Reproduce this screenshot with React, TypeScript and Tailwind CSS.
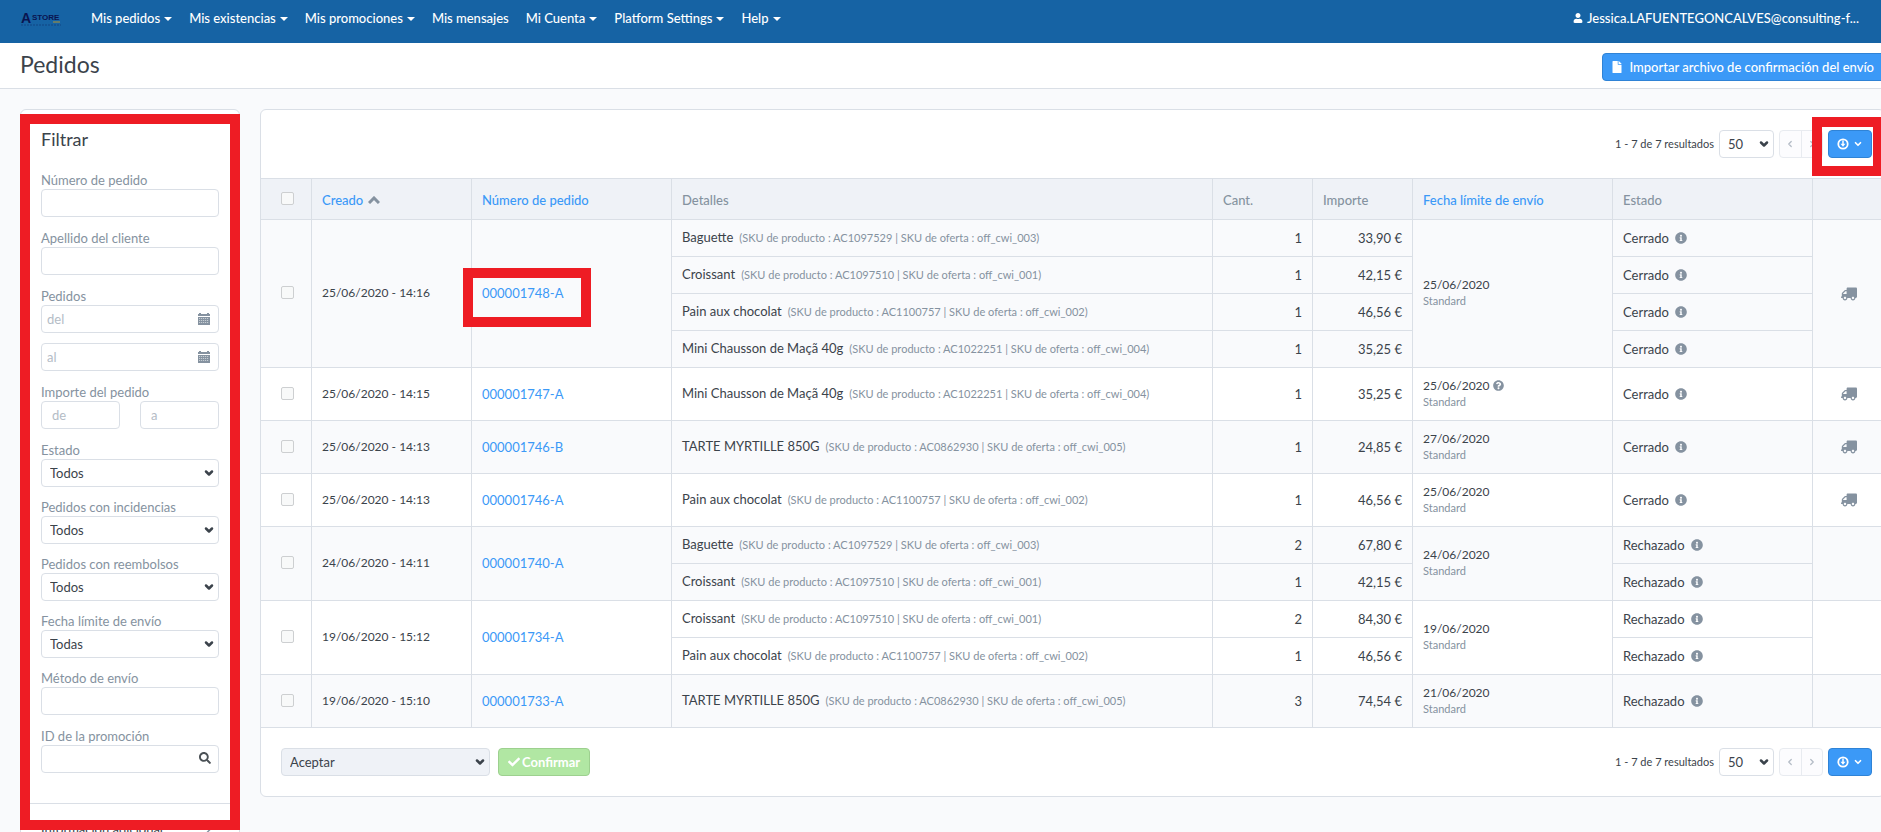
import React from 'react'
import { FaUser, FaFile, FaInfoCircle, FaQuestionCircle, FaTruck, FaCheck, FaSearch } from 'react-icons/fa'
import { LuChevronDown, LuChevronLeft, LuChevronRight } from 'react-icons/lu'

const menu = [
  { label: 'Mis pedidos', caret: true },
  { label: 'Mis existencias', caret: true },
  { label: 'Mis promociones', caret: true },
  { label: 'Mis mensajes', caret: false },
  { label: 'Mi Cuenta', caret: true },
  { label: 'Platform Settings', caret: true },
  { label: 'Help', caret: true },
]

const baguette = { name: 'Baguette', sku: 'AC1097529', offer: 'off_cwi_003' }
const croissant = { name: 'Croissant', sku: 'AC1097510', offer: 'off_cwi_001' }
const pain = { name: 'Pain aux chocolat', sku: 'AC1100757', offer: 'off_cwi_002' }
const chausson = { name: 'Mini Chausson de Maçã 40g', sku: 'AC1022251', offer: 'off_cwi_004' }
const tarte = { name: 'TARTE MYRTILLE 850G', sku: 'AC0862930', offer: 'off_cwi_005' }

const orders = [
  {
    id: '000001748-A', created: '25/06/2020 - 14:16', due: '25/06/2020', state: 'Cerrado', truck: true, marked: true,
    lines: [
      { ...baguette, qty: 1, amount: '33,90 €' },
      { ...croissant, qty: 1, amount: '42,15 €' },
      { ...pain, qty: 1, amount: '46,56 €' },
      { ...chausson, qty: 1, amount: '35,25 €' },
    ],
  },
  { id: '000001747-A', created: '25/06/2020 - 14:15', due: '25/06/2020', help: true, state: 'Cerrado', truck: true, lines: [{ ...chausson, qty: 1, amount: '35,25 €' }] },
  { id: '000001746-B', created: '25/06/2020 - 14:13', due: '27/06/2020', state: 'Cerrado', truck: true, lines: [{ ...tarte, qty: 1, amount: '24,85 €' }] },
  { id: '000001746-A', created: '25/06/2020 - 14:13', due: '25/06/2020', state: 'Cerrado', truck: true, lines: [{ ...pain, qty: 1, amount: '46,56 €' }] },
  {
    id: '000001740-A', created: '24/06/2020 - 14:11', due: '24/06/2020', state: 'Rechazado',
    lines: [
      { ...baguette, qty: 2, amount: '67,80 €' },
      { ...croissant, qty: 1, amount: '42,15 €' },
    ],
  },
  {
    id: '000001734-A', created: '19/06/2020 - 15:12', due: '19/06/2020', state: 'Rechazado',
    lines: [
      { ...croissant, qty: 2, amount: '84,30 €' },
      { ...pain, qty: 1, amount: '46,56 €' },
    ],
  },
  { id: '000001733-A', created: '19/06/2020 - 15:10', due: '21/06/2020', state: 'Rechazado', lines: [{ ...tarte, qty: 3, amount: '74,54 €' }] },
]

const box = 'h-7 w-full rounded border border-[#dadfe6] bg-white'
const border = 'border-b border-r border-[#dadfe6]'
const head = `${border} px-[10px] pt-[2px] font-medium`
const cell = `${border} px-[10px] pb-px`
const labelText = 'mb-px block leading-[15px] text-[#8592a0]'
const blueButton = 'flex h-7 items-center rounded border border-[#2f83d6] bg-[#3b99f7] text-white'

const Logo = () => (
  <a href="#" aria-label="Astore" className="mt-3 block w-10 shrink-0">
    <svg viewBox="0 0 40 15" className="h-[15px] w-10 overflow-visible">
      <text x="0" y="11" fontSize="14" fontWeight="700" fontFamily="Liberation Sans, sans-serif" fill="#0a1450">A</text>
      <text x="11" y="8" fontSize="8" fontWeight="700" fontFamily="Liberation Sans, sans-serif" fill="#0a1450">STORE</text>
      <path d="M32 10h7" stroke="#7f8558" strokeWidth="1.5" />
      <path d="M0 13h40" stroke="#13508f" strokeWidth="1.5" strokeDasharray="2 1" />
    </svg>
  </a>
)

const Caret = () => (
  <svg viewBox="0 0 8 4" className="mt-[2px] h-1 w-2" fill="currentColor">
    <path d="M0 0h8l-4 4z" />
  </svg>
)

const CalendarIcon = () => (
  <svg viewBox="0 0 12 12" className="absolute right-[9px] top-2 h-3 w-3" fill="#8592a0">
    <path d="M0 1h1v-1h2v1h6v-1h2v1h1v2h-12z" />
    <path d="M0 4h12v8h-12z" />
    <path d="M1 5.5h10M1 7.5h10M1 9.5h10" stroke="#e3e6ea" strokeWidth=".7" strokeDasharray="1.2 .8" />
  </svg>
)

const Select = ({ id, options, className = '' }: { id: string; options: string[]; className?: string }) => (
  <div className="relative">
    <select id={id} aria-label={id} className={`h-7 w-full appearance-none rounded border border-[#dadfe6] pl-2 text-[#3b434b] ${className || 'bg-white'}`}>
      {options.map((o) => <option key={o}>{o}</option>)}
    </select>
    <LuChevronDown strokeWidth={5} className="pointer-events-none absolute right-1 top-2 size-3 text-[#3b434b]" />
  </div>
)

const Field = ({ id, label, children }: { id: string; label: string; children?: React.ReactNode }) => (
  <div className="mb-[14px]">
    <label htmlFor={id} className={labelText}>{label}</label>
    {children || <input id={id} type="text" className={`${box} px-2`} />}
  </div>
)

const SelectField = ({ id, label, option }: { id: string; label: string; option: string }) => (
  <div className="mb-[13px]">
    <label htmlFor={id} className={labelText}>{label}</label>
    <Select id={id} options={[option]} />
  </div>
)

const Filters = () => (
  <aside className="relative w-[220px] shrink-0">
    <div className="rounded-md border border-[#dadfe6] bg-white">
      <form className="border-b border-[#dadfe6] px-5 pb-4 pt-[17px]">
        <h2 className="mb-[22px] text-lg leading-6 text-[#3b434b]">Filtrar</h2>
        <Field id="numero" label="Número de pedido" />
        <Field id="apellido" label="Apellido del cliente" />
        <Field id="del" label="Pedidos">
          <div className="relative mb-[10px]">
            <input id="del" placeholder="del" className={`${box} px-[5px] placeholder:text-[#b4bcc6]`} />
            <CalendarIcon />
          </div>
          <div className="relative">
            <input aria-label="al" placeholder="al" className={`${box} px-[5px] placeholder:text-[#b4bcc6]`} />
            <CalendarIcon />
          </div>
        </Field>
        <Field id="importe" label="Importe del pedido">
          <div className="flex gap-5">
            <input id="importe" placeholder="de" className={`${box} min-w-0 px-[10px] placeholder:text-[#b4bcc6]`} />
            <input aria-label="a" placeholder="a" className={`${box} min-w-0 px-[10px] placeholder:text-[#b4bcc6]`} />
          </div>
        </Field>
        <SelectField id="estado" label="Estado" option="Todos" />
        <SelectField id="incidencias" label="Pedidos con incidencias" option="Todos" />
        <SelectField id="reembolsos" label="Pedidos con reembolsos" option="Todos" />
        <SelectField id="fecha" label="Fecha límite de envío" option="Todas" />
        <Field id="metodo" label="Método de envío" />
        <Field id="promocion" label="ID de la promoción">
          <div className="relative">
            <input id="promocion" className={`${box} px-2`} />
            <FaSearch className="absolute right-2 top-[7px] size-3 text-[#4b5156]" />
          </div>
        </Field>
      </form>
      <button className="flex w-full items-center justify-between px-5 py-4 text-[#3b434b]">
        <span className="leading-[18px]">Información adicional</span>
        <LuChevronRight strokeWidth={3} className="mr-1 size-3 text-[#8592a0]" />
      </button>
    </div>
    <div className="pointer-events-none absolute inset-x-0 top-[5px] h-[716px] border-[10px] border-[#ee1c24]" />
  </aside>
)

const Pager = ({ id, marked }: { id: string; marked?: boolean }) => (
  <div className="flex items-center pr-3 text-[#3b434b]">
    <span className="mr-[5px] text-[11px]">1 - 7 de 7 resultados</span>
    <div className="mr-[5px] w-[55px]"><Select id={id} options={['50']} /></div>
    <div className="mr-[5px] flex h-7 w-11 rounded border border-[#e8ebf0] bg-[#fcfcfe] text-[#b4bcc6]">
      <button aria-label="Anterior" className="flex flex-1 items-center justify-center border-r border-[#e8ebf0]"><LuChevronLeft className="size-[10px]" strokeWidth={3} /></button>
      <button aria-label="Siguiente" className="flex flex-1 items-center justify-center"><LuChevronRight className="size-[10px]" strokeWidth={3} /></button>
    </div>
    <div className="relative">
      <button aria-label="Exportar" className={`${blueButton} w-11 justify-between px-2`}>
        <svg viewBox="0 0 12 12" className="size-3" fill="none" stroke="#fff">
          <circle cx="6" cy="6" r="4.7" strokeWidth="1.8" />
          <path d="M6 2.500v3.500" strokeWidth="1.5" />
          <path d="M3.500 5.700h5l-2.500 3z" fill="#fff" stroke="none" />
        </svg>
        <LuChevronDown strokeWidth={4} className="size-[10px]" />
      </button>
      {marked && <div className="pointer-events-none absolute -left-4 -top-[13px] h-[59px] w-[71px] border-[10px] border-[#ee1c24]" />}
    </div>
  </div>
)

const Check = ({ label }: { label: string }) => (
  <input type="checkbox" aria-label={label} className="block size-[13px] appearance-none rounded-[2px] border border-[#cdcfd1] bg-[#f8f9f9]" />
)

const OrdersTable = () => (
  <table className="w-full table-fixed border-separate border-spacing-0 text-left text-[#3b434b]">
    <colgroup>
      <col className="w-[51px]" />
      <col className="w-[160px]" />
      <col className="w-[200px]" />
      <col />
      <col className="w-[100px]" />
      <col className="w-[100px]" />
      <col className="w-[200px]" />
      <col className="w-[200px]" />
      <col className="w-[71px]" />
    </colgroup>
    <thead>
      <tr className="h-[41px] bg-[#eff2f7] text-[#8592a0]">
        <th className={`${border} pb-px pl-5`}><Check label="Todos los pedidos" /></th>
        <th className={head}>
          <a href="#" className="flex items-center gap-[5px] text-[#3b99f7]">
            Creado
            <svg viewBox="0 0 12 8" className="h-2 w-3" fill="none" stroke="#8592a0" strokeWidth="3">
              <path d="M1 7l5-5 5 5" />
            </svg>
          </a>
        </th>
        <th className={head}><a href="#" className="text-[#3b99f7]">Número de pedido</a></th>
        <th className={head}>Detalles</th>
        <th className={head}>Cant.</th>
        <th className={head}>Importe</th>
        <th className={head}><a href="#" className="text-[#3b99f7]">Fecha límite de envío</a></th>
        <th className={head}>Estado</th>
        <th className="border-b border-[#dadfe6]"></th>
      </tr>
    </thead>
    <tbody>
      {orders.map((order, n) => order.lines.map((line, i) => (
        <tr key={order.id + i} className={`${order.lines.length > 1 ? 'h-[37px]' : 'h-[53px]'} ${n % 2 ? 'bg-white' : 'bg-[#f9fafc]'}`}>
          {i === 0 && (
            <>
              <td rowSpan={order.lines.length} className={`${border} pb-[2px] pl-5`}><Check label={order.id} /></td>
              <td rowSpan={order.lines.length} className={`${cell} text-xs`}>{order.created}</td>
              <td rowSpan={order.lines.length} className={cell}>
                <div className="relative">
                  <a href="#" className="text-[#3b99f7]">{order.id}</a>
                  {order.marked && <div className="pointer-events-none absolute -left-[19px] -top-4 h-[59px] w-32 border-[10px] border-[#ee1c24]" />}
                </div>
              </td>
            </>
          )}
          <td className={cell}>
            {line.name}
            <span className="ml-[6px] text-[11px] text-[#8592a0]">(SKU de producto : {line.sku} | SKU de oferta : {line.offer})</span>
          </td>
          <td className={`${cell} text-right`}>{line.qty}</td>
          <td className={`${cell} text-right`}>{line.amount}</td>
          {i === 0 && (
            <td rowSpan={order.lines.length} className={cell}>
              <div className="flex items-center gap-[3px] text-xs leading-4">{order.due}{order.help && <FaQuestionCircle className="size-[11px] text-[#8592a0]" />}</div>
              <div className="text-[11px] leading-4 text-[#8592a0]">Standard</div>
            </td>
          )}
          <td className={cell}>
            <div className="flex items-center gap-[6px]">{order.state}<FaInfoCircle className="size-3 text-[#8592a0]" /></div>
          </td>
          {i === 0 && (
            <td rowSpan={order.lines.length} className="border-b border-[#dadfe6]">
              {order.truck && <FaTruck className="mx-auto size-4 -scale-x-100 text-[#8592a0]" />}
            </td>
          )}
        </tr>
      )))}
    </tbody>
  </table>
)

const App = () => {
  return (
    <div className="h-screen w-full overflow-hidden bg-[#f9fafc] font-['Lato',sans-serif] text-[13px] leading-[18px]">
      <nav className="flex h-[43px] bg-[#1663a4] pl-[21px] font-medium text-white">
        <Logo />
        <ul className="ml-[30px] flex gap-[17px] pt-[9px]">
          {menu.map((item) => (
            <li key={item.label}>
              <a href="#" className="flex items-center gap-1">{item.label}{item.caret && <Caret />}</a>
            </li>
          ))}
        </ul>
        <a href="#" className="ml-auto mr-[22px] flex h-9 items-center gap-1"><FaUser className="size-[10px]" />Jessica.LAFUENTEGONCALVES@consulting-f...</a>
      </nav>

      <header className="flex h-[46px] items-start border-b border-[#dadfe6] bg-white pl-5">
        <h1 className="pt-[7px] text-[23px] leading-7 text-[#3b434b]">Pedidos</h1>
        <button className={`${blueButton} -mr-1 ml-auto mt-[10px] gap-[6px] pl-2 pr-[10px] font-medium`}><FaFile className="size-3" />Importar archivo de confirmación del envío</button>
      </header>

      <main className="flex items-start gap-5 pl-5 pt-5">
        <Filters />
        <section className="-mr-1 min-w-0 flex-1 rounded-md border border-[#dadfe6] bg-white">
          <div className="flex justify-end border-b border-[#dadfe6] py-5">
            <Pager id="Resultados por página" marked />
          </div>
          <OrdersTable />
          <div className="flex items-center py-5 pl-5">
            <div className="w-[209px]"><Select id="Acción" options={['Aceptar']} className="bg-[#eff2f7]" /></div>
            <button className="ml-2 flex h-7 items-center gap-[2px] rounded border border-[#9dd08f] bg-[#b1e7a3] px-[9px] font-bold text-white"><FaCheck className="size-3" />Confirmar</button>
            <div className="ml-auto"><Pager id="Resultados por página (pie)" /></div>
          </div>
        </section>
      </main>
    </div>
  )
}

export default App
